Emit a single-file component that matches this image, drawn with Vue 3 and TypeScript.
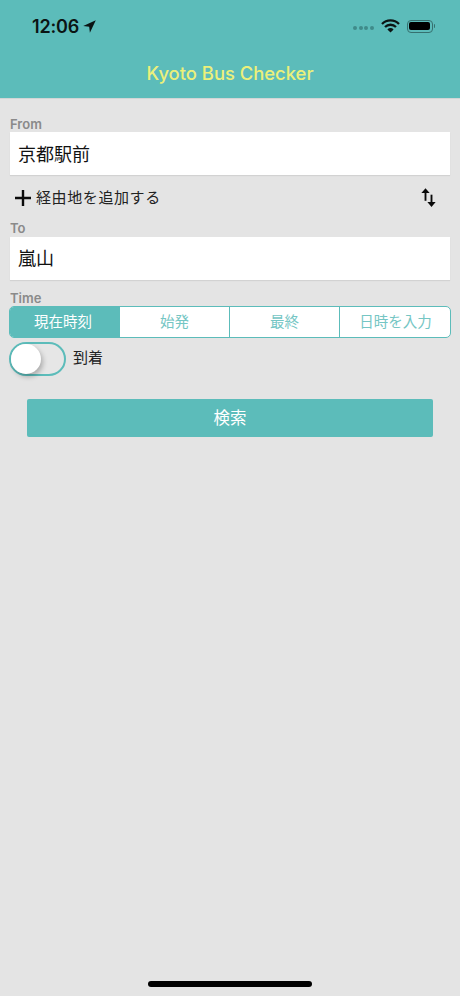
<script setup lang="ts">
const tabs: string[] = ['現在時刻', '始発', '最終', '日時を入力']
</script>

<template>
  <div class="page">
    <header class="header">
      <div class="status">
        <div class="time-wrap">
          <span class="time">12:06</span>
          <svg class="loc" width="13" height="13" viewBox="0 0 13 13"><path d="M12.8 .2 L.2 6 L6.2 6.7 L6.9 12.8 Z" fill="#0b1414"/></svg>
        </div>
        <div class="status-right">
          <div class="dots"><i></i><i></i><i></i><i></i></div>
          <svg class="wifi" width="19" height="14" viewBox="0 0 19 14">
            <path d="M1 5 A12 12 0 0 1 18 5 M4 8 A7.8 7.8 0 0 1 15 8" fill="none" stroke="#0b1414" stroke-width="2.3"/>
            <path d="M9.5 13.6 L6.4 10.4 A4.4 4.4 0 0 1 12.6 10.4 Z" fill="#0b1414"/>
          </svg>
          <div class="battery"><div class="battery-fill"></div></div>
          <div class="battery-cap"></div>
        </div>
      </div>
      <div class="title">Kyoto Bus Checker</div>
    </header>

    <main class="form">
      <label class="label label-from">From</label>
      <div class="field">京都駅前</div>

      <div class="via">
        <div class="via-left">
          <svg width="16" height="16" viewBox="0 0 16 16"><path d="M8 0 V16 M0 8 H16" stroke="#0a0a0a" stroke-width="2.4"/></svg>
          <span class="via-text">経由地を追加する</span>
        </div>
        <svg class="swap" width="15" height="21" viewBox="0 0 16 21">
          <path d="M4.8 14 V4.5" stroke="#0a0a0a" stroke-width="2"/>
          <path d="M4.8 0.5 L9.2 5.6 H.4 Z" fill="#0a0a0a"/>
          <path d="M11.2 7.5 V16.5" stroke="#0a0a0a" stroke-width="2"/>
          <path d="M11.2 20.5 L6.8 15.4 H15.6 Z" fill="#0a0a0a"/>
        </svg>
      </div>

      <label class="label label-to">To</label>
      <div class="field field-to">嵐山</div>

      <label class="label label-time">Time</label>
      <div class="segments">
        <div v-for="(tab, i) in tabs" :key="tab" class="segment" :class="{ active: i === 0 }">{{ tab }}</div>
      </div>

      <div class="toggle-row">
        <div class="toggle"><div class="knob"></div></div>
        <span class="toggle-label">到着</span>
      </div>

      <button class="search" type="button">検索</button>
    </main>

    <div class="home-bar"></div>
  </div>
</template>

<style scoped>
.page {
  position: relative;
  width: 460px;
  height: 996px;
  background: #e4e4e4;
  overflow: hidden;
  font-family: "Noto Sans CJK JP", "Noto Sans", sans-serif;
}
.header {
  background: #5cbcba;
  box-sizing: border-box;
  border-bottom: 1px solid #d2d6d6;
  height: 99px;
}
.status {
  display: flex;
  justify-content: space-between;
  align-items: center;
  height: 52px;
  padding: 0 25px 0 32px;
}
.time-wrap {
  display: flex;
  align-items: center;
  gap: 4px;
}
.time {
  font-family: Inter, "Liberation Sans", sans-serif;
  font-weight: 600;
  font-size: 18px;
  letter-spacing: -0.2px;
  color: #0b1414;
}
.status-right {
  display: flex;
  align-items: center;
}
.dots {
  display: flex;
  gap: 1.5px;
  margin-right: 7px;
  margin-top: 4px;
}
.dots i {
  width: 4px;
  height: 4px;
  border-radius: 50%;
  background: #3f8b8a;
}
.wifi {
  margin-right: 7px;
}
.battery {
  width: 26px;
  height: 13px;
  box-sizing: border-box;
  border: 1px solid #36706f;
  border-radius: 4px;
  padding: 1.5px;
}
.battery-fill {
  height: 100%;
  background: #000;
  border-radius: 2px;
}
.battery-cap {
  width: 1.5px;
  height: 4px;
  margin-left: 1px;
  background: #36706f;
  border-radius: 0 1px 1px 0;
}
.title {
  text-align: center;
  font-family: Inter, "Liberation Sans", sans-serif;
  font-weight: 500;
  font-size: 18.4px;
  line-height: 42px;
  color: #ecf07a;
}
.form {
  display: flex;
  flex-direction: column;
  padding: 0 10px;
}
.label {
  font-family: Inter, "Liberation Sans", sans-serif;
  font-weight: 600;
  font-size: 13px;
  line-height: 16px;
  color: #8a8a8a;
}
.label-from {
  margin-top: 17px;
}
.field {
  height: 43px;
  background: #fff;
  box-shadow: 0 1px 1px rgba(0, 0, 0, 0.08);
  font-size: 18px;
  line-height: 43px;
  padding-left: 8px;
  color: #111;
}
.field-to {
  line-height: 41px;
}
.via {
  display: flex;
  justify-content: space-between;
  align-items: center;
  height: 46px;
  padding: 0 14px 0 5px;
}
.via-left {
  display: flex;
  align-items: center;
  gap: 5px;
  font-size: 15px;
  letter-spacing: 0.6px;
  color: #222;
}
.via-text {
  line-height: 20px;
  margin-top: -2px;
}
.swap {
  margin-top: -2px;
}
.label-to {
  margin: -1px 0 1px;
}
.label-time {
  margin: 10px 0 1px;
}
.segments {
  display: grid;
  grid-template-columns: 109px 110px 110px 1fr;
  height: 32px;
  box-sizing: border-box;
  border: 1px solid #5cbcba;
  border-radius: 5px;
  overflow: hidden;
  background: #fff;
  margin: -1px -1px 0;
}
.segment {
  font-size: 14.5px;
  line-height: 27px;
  text-align: center;
  color: #75c6c4;
  border-left: 1px solid #5cbcba;
}
.segment:last-child {
  padding-left: 1px;
}
.segment.active {
  background: #5cbcba;
  color: #fff;
  border-left: none;
  padding-right: 3px;
}
.toggle-row {
  display: flex;
  align-items: center;
  gap: 7px;
  margin-top: 4px;
  margin-left: -1px;
}
.toggle {
  width: 57px;
  height: 34px;
  box-sizing: border-box;
  border: 2px solid #5cbcba;
  border-radius: 17px;
  background: #e6e6e6;
  position: relative;
}
.knob {
  position: absolute;
  left: 0;
  top: 0;
  width: 30px;
  height: 30px;
  border-radius: 50%;
  background: #fff;
  box-shadow: 2px 3px 5px rgba(0, 0, 0, 0.25);
}
.toggle-label {
  font-size: 15px;
  line-height: 20px;
  margin-top: -4px;
  color: #222;
}
.search {
  display: block;
  width: 406px;
  height: 38px;
  margin: 23px 0 0 17px;
  padding: 0 0 2px;
  border: none;
  border-radius: 2px;
  background: #5cbcba;
  color: #fff;
  font-family: inherit;
  font-size: 16.5px;
}
.home-bar {
  position: absolute;
  left: 148px;
  top: 981px;
  width: 164px;
  height: 6px;
  border-radius: 3px;
  background: #000;
}
</style>
